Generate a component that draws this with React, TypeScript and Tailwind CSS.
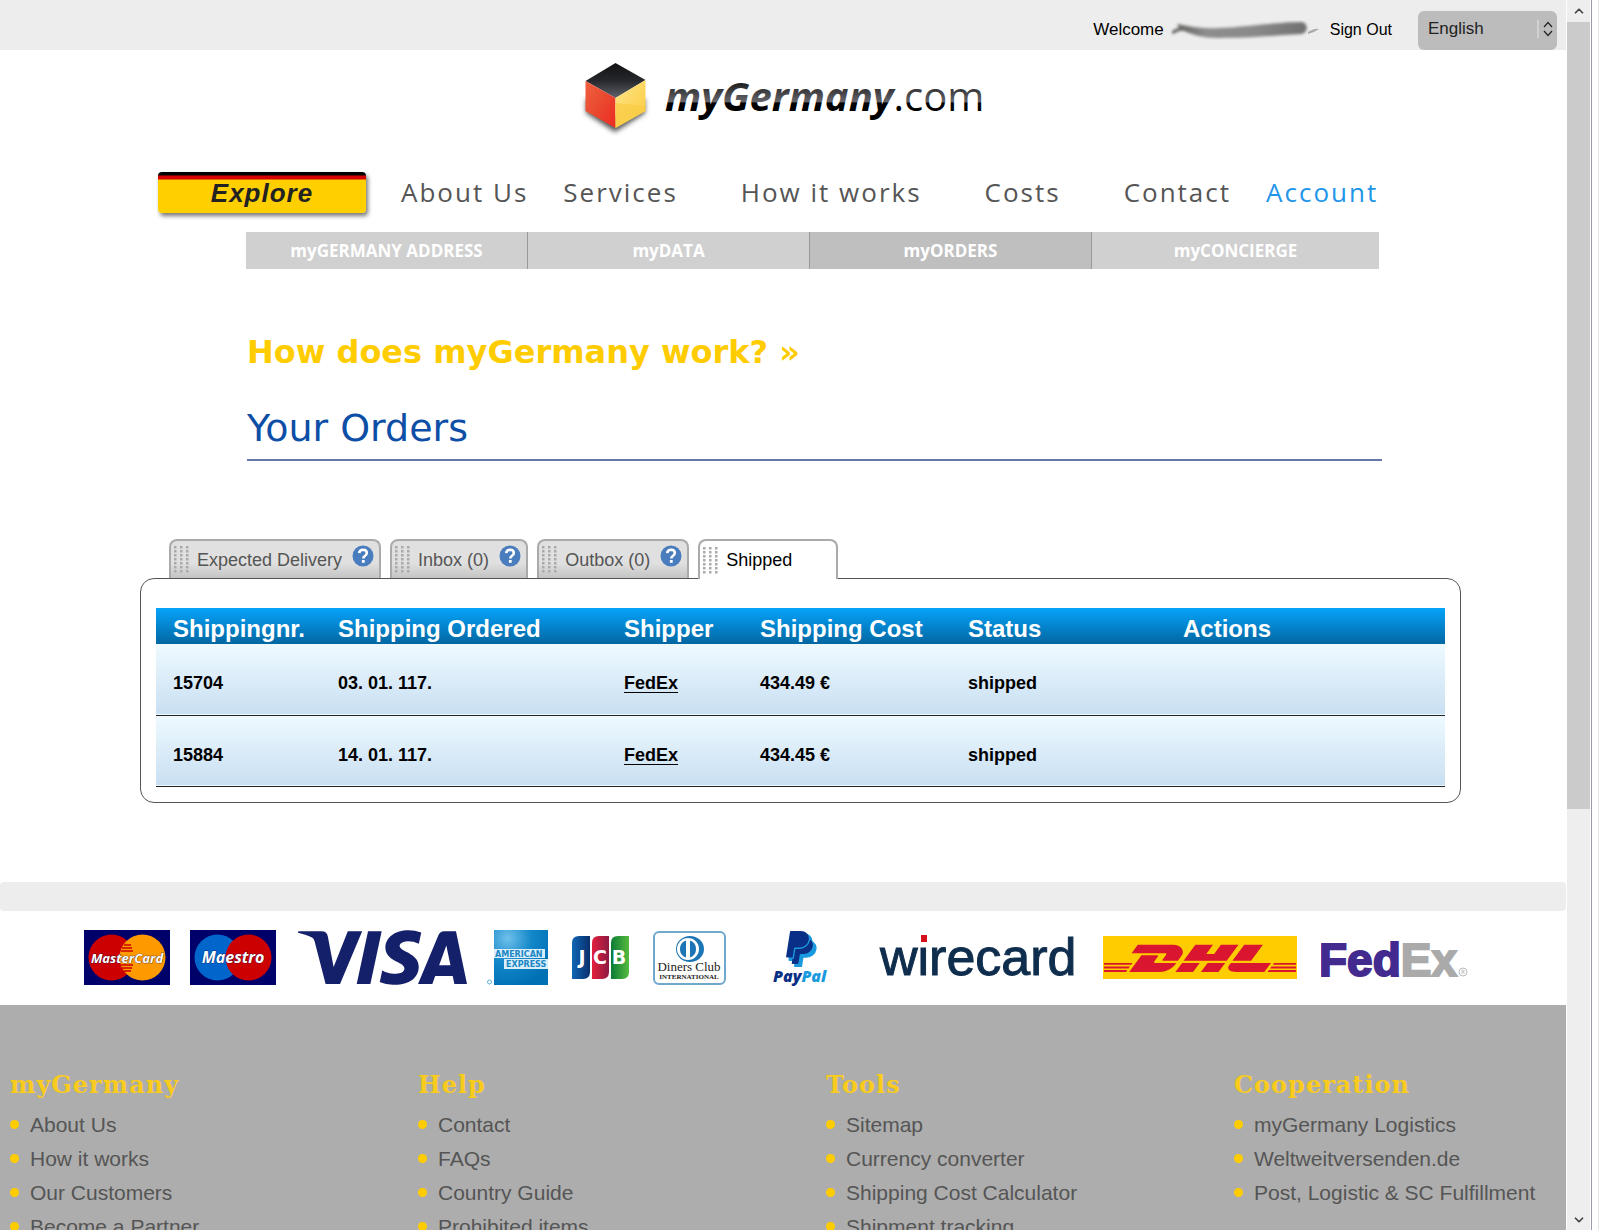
import { useState } from 'react';
import { ChevronDown, ChevronUp } from 'lucide-react';
import { SiDhl, SiPaypal, SiVisa } from 'react-icons/si';

type Order = { id: string; ordered: string; shipper: string; cost: string; status: string };

const orders: Order[] = [
  { id: '15704', ordered: '03. 01. 117.', shipper: 'FedEx', cost: '434.49 €', status: 'shipped' },
  { id: '15884', ordered: '14. 01. 117.', shipper: 'FedEx', cost: '434.45 €', status: 'shipped' },
];

const columns = [
  { label: 'Shippingnr.', width: 'w-[165px]' },
  { label: 'Shipping Ordered', width: 'w-[286px]' },
  { label: 'Shipper', width: 'w-[136px]' },
  { label: 'Shipping Cost', width: 'w-[208px]' },
  { label: 'Status', width: 'w-[215px]' },
  { label: 'Actions', width: '' },
];

const tabs = [
  { label: 'Expected Delivery', help: true },
  { label: 'Inbox (0)', help: true },
  { label: 'Outbox (0)', help: true },
  { label: 'Shipped', help: false },
];

const accountLinks = ['myGERMANY ADDRESS', 'myDATA', 'myORDERS', 'myCONCIERGE'];

const footerColumns = [
  { title: 'myGermany', links: ['About Us', 'How it works', 'Our Customers', 'Become a Partner'] },
  { title: 'Help', links: ['Contact', 'FAQs', 'Country Guide', 'Prohibited items'] },
  { title: 'Tools', links: ['Sitemap', 'Currency converter', 'Shipping Cost Calculator', 'Shipment tracking'] },
  { title: 'Cooperation', links: ['myGermany Logistics', 'Weltweitversenden.de', 'Post, Logistic & SC Fulfillment'] },
];

function TopBar() {
  return (
    <div className="flex h-[50px] shrink-0 items-end justify-end bg-[#ededed] pr-[9px] text-[17px] text-black">
      <div className="flex h-10 items-center">
        <span>Welcome</span>
        <svg width="158" height="20" viewBox="0 0 158 20" className="ml-1 mr-1" aria-hidden="true">
          <defs>
            <linearGradient id="smudge" x1="0" y1="0" x2="1" y2="0">
              <stop offset="0" stopColor="#5a5a58" />
              <stop offset="0.25" stopColor="#8c8c8c" />
              <stop offset="0.6" stopColor="#8a8a8a" />
              <stop offset="1" stopColor="#707070" />
            </linearGradient>
            <filter id="soft" x="-10%" y="-50%" width="120%" height="200%">
              <feGaussianBlur stdDeviation="1.4" />
            </filter>
          </defs>
          <path
            d="M9 4 C21 6 30 9 50 8 C80 7 96 3 133 2 C140 2 141 12 134 14 C110 15 90 18 50 18 C34 18 26 15 16 11 C12 10 9 12 5 14 C2 12 6 9 11 8 Z"
            fill="url(#smudge)"
            filter="url(#soft)"
          />
          <path d="M140 12 Q147 8 151 9 Q147 12 140 14 Z" fill="#aaa" />
        </svg>
        <a href="#signout" className="text-base">
          Sign Out
        </a>
      </div>
      <div className="relative ml-[26px]">
        <select
          aria-label="Language"
          defaultValue="en"
          className="block h-[39px] w-[139px] appearance-none rounded-md bg-[#bcbcbc] pb-1 pl-[10px] text-[17px] text-[#222]"
        >
          <option value="en">English</option>
          <option value="de">Deutsch</option>
        </select>
        <span className="pointer-events-none absolute right-1 top-[9px] flex h-[18px] items-center border-l-2 border-[#d2d2d2] pl-1">
          <svg width="10" height="16" viewBox="0 0 10 16" fill="none" stroke="#222" strokeWidth="1.2">
            <path d="M1 6 L5 1.5 L9 6 M1 10 L5 14.5 L9 10" />
          </svg>
        </span>
      </div>
    </div>
  );
}

function Logo() {
  return (
    <svg width="420" height="84" viewBox="0 0 420 84" role="img" aria-label="myGermany.com">
      <defs>
        <linearGradient id="cubeTop" x1="0" y1="0" x2="0" y2="1">
          <stop offset="0" stopColor="#111" />
          <stop offset="0.5" stopColor="#26272c" />
          <stop offset="1" stopColor="#60636b" />
        </linearGradient>
        <linearGradient id="cubeLeft" x1="0" y1="0" x2="1" y2="1">
          <stop offset="0" stopColor="#f0603f" />
          <stop offset="0.5" stopColor="#e9492f" />
          <stop offset="1" stopColor="#ee2b22" />
        </linearGradient>
        <linearGradient id="cubeRight" x1="0" y1="0" x2="1" y2="1">
          <stop offset="0" stopColor="#ffe58a" />
          <stop offset="1" stopColor="#f9c93a" />
        </linearGradient>
        <linearGradient id="wordmark" gradientUnits="userSpaceOnUse" x1="0" y1="24" x2="0" y2="64">
          <stop offset="0" stopColor="#1b1b1d" />
          <stop offset="0.5" stopColor="#66666b" />
          <stop offset="0.52" stopColor="#000" />
          <stop offset="1" stopColor="#000" />
        </linearGradient>
        <filter id="cubeShadow" x="-20%" y="-20%" width="140%" height="140%">
          <feGaussianBlur stdDeviation="2.5" />
        </filter>
      </defs>
      <path d="M11 40 L40 60 L70 40 L70 55 L40 74 L11 55 Z" fill="#555" filter="url(#cubeShadow)" />
      <path d="M40.500 5 L70.500 22 L40.500 40 L10.500 23 Z" fill="url(#cubeTop)" />
      <path d="M10.500 23 L40.500 40 L40.500 70 L10.500 53 Z" fill="url(#cubeLeft)" />
      <path d="M70.500 22 L40.500 40 L40.500 70 L70.500 53 Z" fill="url(#cubeRight)" />
      <path d="M40.500 45 L70.500 48 L70.500 53 L40.500 70 Z" fill="#f8cc45" opacity="0.7" />
      <text x="90" y="53" fontFamily="Open Sans, sans-serif" fontSize="40" fill="url(#wordmark)">
        <tspan fontWeight="700" fontStyle="italic">
          myGermany
        </tspan>
        <tspan>.com</tspan>
      </text>
    </svg>
  );
}

function MainNav() {
  return (
    <nav className="flex h-[42px] items-center gap-[35px] pl-[158px] font-['Open_Sans',sans-serif] text-[26px] tracking-[2px] text-[#555]">
      <a
        href="#explore"
        className="flex h-[41px] w-[208px] items-center justify-center rounded-[4px] bg-[linear-gradient(#000_0,#000_3px,#d50000_4px,#d50000_7px,#ffcf00_8px)] pt-[2px] font-['Liberation_Sans',sans-serif] font-bold italic tracking-[1px] text-[#222] shadow-[2px_3px_4px_#777]"
      >
        Explore
      </a>
      <a href="#about">About Us</a>
      <div className="flex gap-[63px]">
        <a href="#services">Services</a>
        <a href="#how">How it works</a>
        <a href="#costs">Costs</a>
        <a href="#contact">Contact</a>
      </div>
      <a href="#account" className="text-[#2196e8]">
        Account
      </a>
    </nav>
  );
}

function AccountNav() {
  return (
    <nav className="ml-[246px] mr-[187px] mt-[19px] grid h-[37px] grid-cols-[282fr_282fr_282fr_287fr] font-['Open_Sans',sans-serif] text-[17px] font-bold text-white">
      {accountLinks.map((link, i) => (
        <a
          key={link}
          href={`#${link}`}
          className={`flex items-center justify-center border-[#999] ${i < 3 ? 'border-r' : ''} ${
            link === 'myORDERS' ? 'bg-[#bfbfbf]' : 'bg-[#d0d0d0]'
          }`}
        >
          {link}
        </a>
      ))}
    </nav>
  );
}

function Grip() {
  return (
    <svg width="16" height="27" viewBox="0 0 16 27" fill="#aaa" aria-hidden="true">
      {[0, 1, 2, 3, 4, 5, 6].map((row) =>
        [0, 1, 2].map((col) => <rect key={`${row}-${col}`} x={col * 6 + 1} y={row * 4} width="2.500" height="2.500" />),
      )}
    </svg>
  );
}

function HelpIcon() {
  return (
    <svg width="22" height="22" viewBox="0 0 22 22" aria-hidden="true">
      <circle cx="11" cy="11" r="10.500" fill="#4a7dbd" />
      <path
        d="M7.200 8.200 Q7.400 4.800 11.200 4.800 Q14.800 4.900 14.800 8 Q14.800 9.800 12.800 11 Q11.300 12 11.300 13.600"
        fill="none"
        stroke="#fff"
        strokeWidth="2.600"
      />
      <rect x="9.900" y="15" width="2.800" height="2.800" fill="#fff" />
    </svg>
  );
}

function OrdersPanel() {
  const [activeTab, setActiveTab] = useState('Shipped');

  return (
    <section className="ml-[140px] mr-[105px] mt-[78px]">
      <div role="tablist" className="relative flex gap-[9px] pl-[29px] text-lg">
        {tabs.map((tab) => {
          const active = tab.label === activeTab;
          return (
            <button
              key={tab.label}
              type="button"
              role="tab"
              aria-selected={active}
              onClick={() => setActiveTab(tab.label)}
              className={`flex items-center rounded-t-lg border-2 border-b-0 border-[#aaa] pl-[2px] ${
                active
                  ? '-mb-px h-10 bg-white pr-[44px] text-black'
                  : 'h-[39px] bg-linear-to-b from-[#e0e0e0] from-60% to-[#c4c4c4] pr-[5px] text-[#555]'
              }`}
            >
              <Grip />
              <span className="ml-2">{tab.label}</span>
              {tab.help && (
                <span className="mb-2 ml-[10px]">
                  <HelpIcon />
                </span>
              )}
            </button>
          );
        })}
      </div>
      <div className="rounded-[14px] border border-[#555] px-[15px] pb-[15px] pt-[29px]">
        <table className="w-full table-fixed border-collapse text-left text-lg font-bold text-black">
          <thead>
            <tr className="h-9 bg-linear-to-b from-[#06a4fb] to-[#0267a2] text-2xl leading-[30px] text-white">
              {columns.map((column) => (
                <th key={column.label} className={`whitespace-nowrap pl-[17px] pt-[6px] ${column.width}`}>
                  {column.label}
                </th>
              ))}
            </tr>
          </thead>
          <tbody>
            {orders.map((order) => (
              <tr key={order.id} className="h-[71px] border-b border-[#222] bg-linear-to-b from-[#eefaff] to-[#c9dff2]">
                <td className="pl-[17px] pt-2">{order.id}</td>
                <td className="pl-[17px] pt-2">{order.ordered}</td>
                <td className="pl-[17px] pt-2">
                  <a href="#fedex" className="underline underline-offset-3">
                    {order.shipper}
                  </a>
                </td>
                <td className="pl-[17px] pt-2">{order.cost}</td>
                <td className="pl-[17px] pt-2">{order.status}</td>
                <td />
              </tr>
            ))}
          </tbody>
        </table>
      </div>
    </section>
  );
}

type CircleCardProps = { name: string; left: string; right: string; size: number };

function CircleCard({ name, left, right, size }: CircleCardProps) {
  return (
    <svg width="86" height="55" viewBox="0 0 86 55" role="img" aria-label={name}>
      <rect width="86" height="55" fill="#00006a" />
      <circle cx="27.500" cy="27.500" r="23" fill={left} />
      <circle cx="58.500" cy="27.500" r="23" fill={right} />
      <path d="M40 15 H47 M38 18 H48 M37 21 H49 M37 35 H49 M38 38 H48 M40 41 H47" stroke="#c00" strokeWidth="1.400" />
      <text
        x="43"
        y="33"
        textAnchor="middle"
        fontFamily="Open Sans, sans-serif"
        fontWeight="700"
        fontStyle="italic"
        fontSize={size}
        fill="#fff"
        stroke="#00003a"
        strokeWidth="0.600"
        paintOrder="stroke"
      >
        {name}
      </text>
    </svg>
  );
}

function AmexLogo() {
  return (
    <svg width="61" height="55" viewBox="0 0 61 55" role="img" aria-label="American Express">
      <defs>
        <radialGradient id="amex" cx="0.25" cy="0.15" r="0.9">
          <stop offset="0" stopColor="#6fc0ea" />
          <stop offset="0.5" stopColor="#1287c9" />
          <stop offset="1" stopColor="#0070b5" />
        </radialGradient>
      </defs>
      <rect x="7" width="54" height="55" fill="url(#amex)" />
      <path d="M7 19 H58 V28 H7 Z M17 29 H61 V39 H17 Z" fill="#d8eefa" />
      <g fontFamily="DejaVu Sans, sans-serif" fontWeight="700" fontSize="8" fill="#1a86c4">
        <text x="8" y="27">AMERICAN</text>
        <text x="19" y="37">EXPRESS</text>
      </g>
      <circle cx="2.500" cy="52" r="2" fill="none" stroke="#5ab0dc" />
    </svg>
  );
}

function JcbLogo() {
  return (
    <svg width="57" height="43" viewBox="0 0 57 43" role="img" aria-label="JCB">
      <defs>
        <linearGradient id="jcbBlue">
          <stop offset="0" stopColor="#0f66b4" />
          <stop offset="1" stopColor="#0a2f6c" />
        </linearGradient>
        <linearGradient id="jcbRed">
          <stop offset="0" stopColor="#e4203c" />
          <stop offset="1" stopColor="#8c1a44" />
        </linearGradient>
        <linearGradient id="jcbGreen">
          <stop offset="0" stopColor="#0d7a36" />
          <stop offset="1" stopColor="#55bb3e" />
        </linearGradient>
      </defs>
      <path d="M7 0 H18 V36 Q18 43 11 43 H0 V7 Q0 0 7 0 Z" fill="url(#jcbBlue)" />
      <path d="M27 0 H37 V36 Q37 43 30 43 H20 V7 Q20 0 27 0 Z" fill="url(#jcbRed)" />
      <path d="M46 0 H57 V36 Q57 43 50 43 H39 V7 Q39 0 46 0 Z" fill="url(#jcbGreen)" />
      <g fontFamily="DejaVu Sans, sans-serif" fontWeight="700" fontSize="19" fill="#fff" textAnchor="middle">
        <text x="10" y="28">J</text>
        <text x="28" y="28">C</text>
        <text x="47" y="28">B</text>
      </g>
    </svg>
  );
}

function DinersLogo() {
  return (
    <svg width="73" height="54" viewBox="0 0 73 54" role="img" aria-label="Diners Club International">
      <rect x="1" y="1" width="71" height="52" rx="5" fill="#fff" stroke="#6fa8cf" strokeWidth="2" />
      <ellipse cx="37" cy="18" rx="14" ry="13" fill="#1c76b5" />
      <circle cx="35" cy="18" r="11" fill="#fff" />
      <path d="M33 9.500 A9 9 0 0 0 33 26.500 Z M37 9.500 A9 9 0 0 1 37 26.500 Z" fill="#1c76b5" />
      <g fontFamily="Liberation Serif, serif" fill="#222" textAnchor="middle">
        <text x="36" y="40" fontSize="13">Diners Club</text>
        <text x="36" y="48" fontSize="7" fontWeight="700">INTERNATIONAL</text>
      </g>
    </svg>
  );
}

function PaypalLogo() {
  return (
    <svg width="58" height="60" viewBox="0 0 58 60" role="img" aria-label="PayPal">
      <SiPaypal x="14" y="6" size={33} color="#1a9ade" stroke="#1a9ade" strokeWidth="1" />
      <SiPaypal x="11" y="3" size={33} color="#0a2f86" />
      <text
        x="1"
        y="54"
        fontFamily="Open Sans, sans-serif"
        fontWeight="800"
        fontStyle="italic"
        fontSize="16"
        fill="#0a2f86"
      >
        Pay<tspan fill="#1a9ade">Pal</tspan>
      </text>
    </svg>
  );
}

function WirecardLogo() {
  return (
    <svg width="200" height="64" viewBox="0 0 200 64" role="img" aria-label="wirecard">
      <text x="1" y="49" fontFamily="Liberation Sans, sans-serif" fontSize="52" fill="#0f2d4d" stroke="#0f2d4d">
        wirecard
      </text>
      <rect x="40" y="8" width="9" height="9" fill="#fff" />
      <rect x="42" y="9" width="6" height="7" fill="#d5101c" />
    </svg>
  );
}

function FedexLogo() {
  return (
    <svg width="150" height="64" viewBox="2 0 150 64" role="img" aria-label="FedEx">
      <text
        x="0"
        y="50"
        fontFamily="Liberation Sans, sans-serif"
        fontWeight="700"
        fontSize="46"
        fill="#432a8f"
        stroke="#432a8f"
        strokeWidth="2"
      >
        Fed
        <tspan fill="#aaa" stroke="#aaa">
          Ex
        </tspan>
      </text>
      <circle cx="144" cy="46" r="4" fill="none" stroke="#bbb" />
      <path d="M143 48 V44 H144.500 Q146 45 144.500 46 H143 M144.500 46 L145.500 48" fill="none" stroke="#bbb" strokeWidth="0.800" />
    </svg>
  );
}

function PaymentLogos() {
  return (
    <div className="flex h-[94px] shrink-0 items-center pl-[84px]">
      <CircleCard name="MasterCard" left="#c00" right="#f90" size={13} />
      <div className="ml-5 flex">
        <CircleCard name="Maestro" left="#06c" right="#c00" size={16} />
      </div>
      <SiVisa viewBox="0 8.100 24 7.800" className="ml-[22px] h-[55px] w-[169px] text-[#15206a]" />
      <div className="ml-5 flex items-center gap-6">
        <AmexLogo />
        <JcbLogo />
        <DinersLogo />
      </div>
      <div className="ml-[46px] flex items-center">
        <PaypalLogo />
      </div>
      <div className="ml-[49px] flex items-center gap-6">
        <WirecardLogo />
        <span className="flex h-[43px] w-[194px] items-center bg-[#fc0]">
          <SiDhl viewBox="0 10.200 24 3.500" className="h-[28px] w-[194px] text-[#d9152f]" />
        </span>
        <FedexLogo />
      </div>
    </div>
  );
}

function Footer() {
  return (
    <footer className="grid flex-1 shrink-0 grid-cols-[408fr_408fr_408fr_332fr] bg-[#adadad] pl-[10px] pt-[64px]">
      {footerColumns.map((column) => (
        <div key={column.title}>
          <h3 className="font-['DejaVu_Serif',serif] text-2xl font-bold tracking-[1px] text-[#f8cb1c]">{column.title}</h3>
          <ul className="mt-[7px] text-[21px] leading-[34px] text-[#555]">
            {column.links.map((link) => (
              <li key={link} className="flex items-center gap-[11px] whitespace-nowrap">
                <span className="h-[9px] w-[9px] shrink-0 rounded-full bg-[#fc0]" />
                <a href={`#${link}`}>{link}</a>
              </li>
            ))}
          </ul>
        </div>
      ))}
    </footer>
  );
}

function Scrollbar() {
  return (
    <div className="flex w-[34px] shrink-0 bg-white" aria-hidden="true">
      <div className="ml-px flex w-[23px] flex-col items-center justify-between bg-[#eee]">
        <div className="flex h-[809px] w-full flex-col items-center bg-[#cbcbcb]">
          <div className="flex h-[22px] w-full items-center justify-center bg-[#eee]">
            <ChevronUp size={14} color="#444" strokeWidth={3} />
          </div>
        </div>
        <ChevronDown size={14} color="#444" strokeWidth={3} className="mb-[3px]" />
      </div>
      <div className="ml-px w-px bg-[#9a9aa8]" />
      <div className="ml-[6px] w-px bg-[#e4e4e8]" />
    </div>
  );
}

export default function App() {
  return (
    <div className="flex h-screen overflow-hidden bg-white font-['Liberation_Sans',sans-serif]">
      <div className="flex min-w-0 flex-1 flex-col">
        <TopBar />
        <header className="shrink-0">
          <a href="#home" className="flex justify-center pb-[29px] pl-1 pt-2">
            <Logo />
          </a>
          <MainNav />
          <AccountNav />
        </header>
        <main className="shrink-0">
          <div className="ml-[247px] mr-[184px] border-b-2 border-[#6577a8] pt-[63px] font-['DejaVu_Sans',sans-serif]">
            <h2 className="text-[32px] font-bold leading-10 text-[#fc0]">
              <a href="#how-it-works">How does myGermany work? »</a>
            </h2>
            <h1 className="mb-[7px] mt-8 text-[38px] leading-[48px] text-[#0d4ea6]">Your Orders</h1>
          </div>
          <OrdersPanel />
        </main>
        <div className="mt-[79px] h-[29px] shrink-0 rounded-[4px] bg-[#ededed]" />
        <PaymentLogos />
        <Footer />
      </div>
      <Scrollbar />
    </div>
  );
}
